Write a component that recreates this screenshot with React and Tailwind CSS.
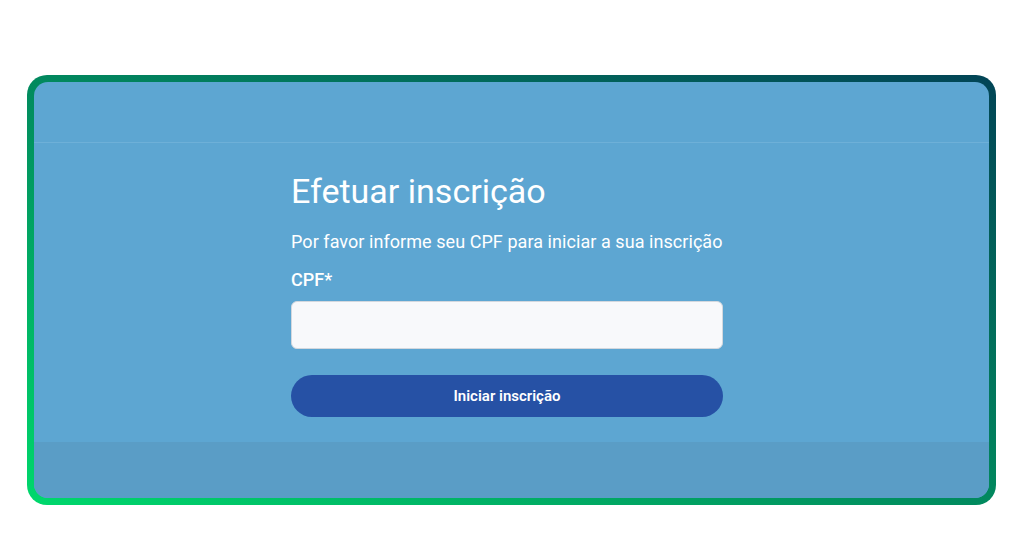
export default function App() {
  return (
    <div className="w-[1024px] h-[536px] bg-white pt-[75px] pl-[27px]" style={{ fontFamily: "Roboto, 'Liberation Sans', sans-serif" }}>
      <div className="w-[969px] h-[430px] rounded-[20px] p-[7px] bg-[linear-gradient(to_top_right,#00d86c,#01905f_45%,#024456)]">
        <div className="w-full h-full rounded-[14px] bg-[#5da6d2] flex flex-col overflow-hidden">
          <div className="h-[61px] shrink-0 border-b border-[#6eb0d8]"></div>
          <div className="flex-1 pl-[257px] pt-[28px]">
            <div className="w-[440px] flex flex-col items-start">
              <h1 className="text-[34px] leading-[40px] text-white font-normal">Efetuar inscrição</h1>
              <p className="mt-[21px] text-[18px] leading-[20px] tracking-[0.06px] text-white">Por favor informe seu CPF para iniciar a sua inscrição</p>
              <label className="mt-[18px] text-[18px] leading-[20px] text-white font-medium">CPF*</label>
              <input className="mt-[11px] w-[432px] h-[48px] rounded-[6px] bg-[#f8f9fb] border border-[#d3d8de] outline-none px-3" />
              <button className="mt-[26px] w-[432px] h-[42px] rounded-full bg-[#2651a5] text-white text-[15px] font-semibold">Iniciar inscrição</button>
            </div>
          </div>
          <div className="h-[56px] shrink-0 bg-[#5a9dc6]"></div>
        </div>
      </div>
    </div>
  );
}
